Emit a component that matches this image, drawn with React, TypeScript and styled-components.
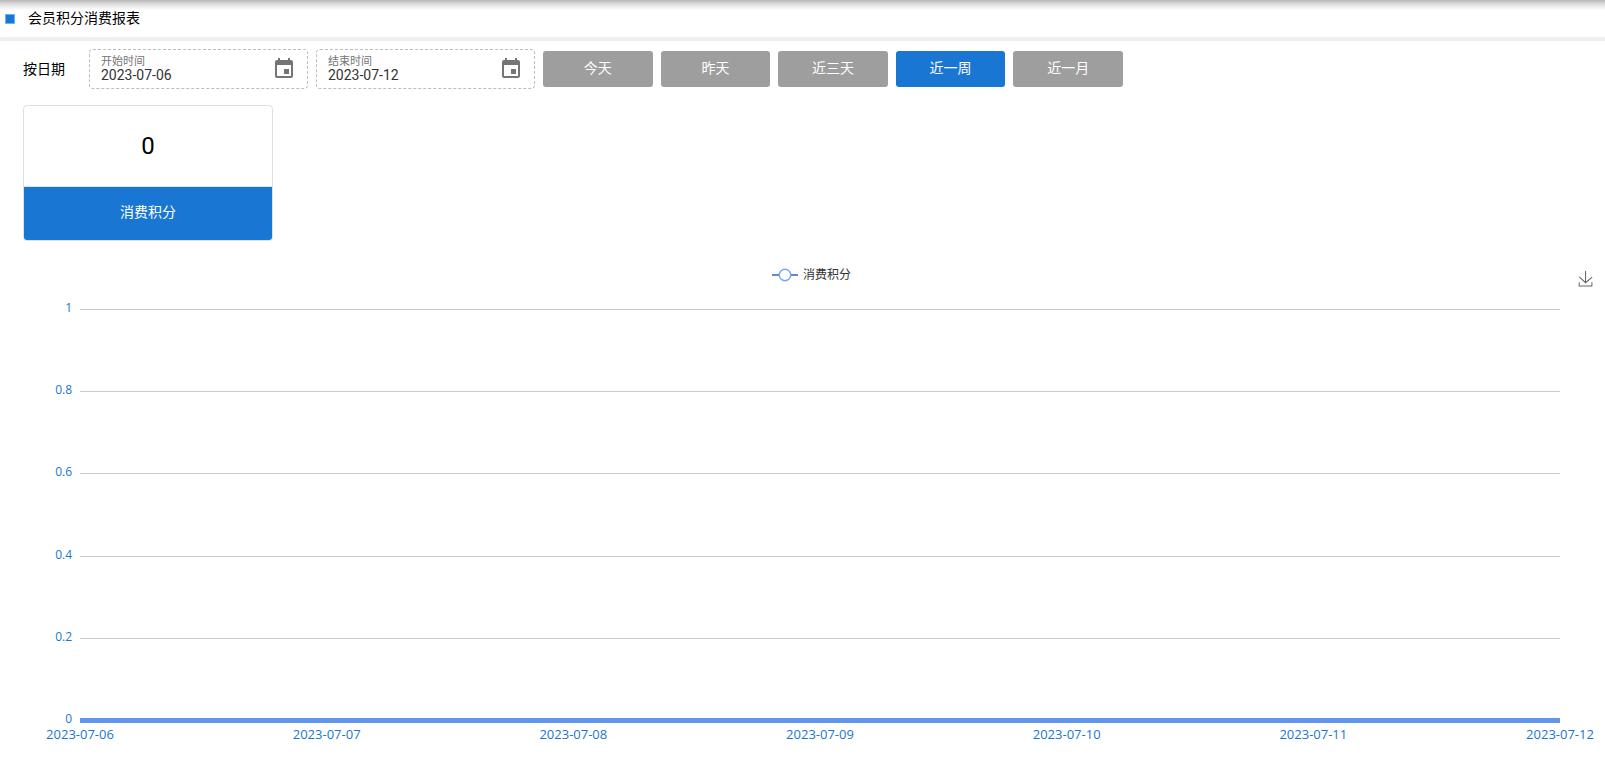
import React, { useState } from "react";
import styled, { createGlobalStyle } from "styled-components";

const BLUE = "#1976d2";

const GlobalStyle = createGlobalStyle`
  *, *::before, *::after { box-sizing: border-box; }
  body {
    margin: 0;
    background: #fff;
    color: #000;
    font: 14px/20px Roboto, "Noto Sans CJK SC", sans-serif;
  }
`;

const Header = styled.header`
  display: flex;
  align-items: center;
  gap: 13px;
  height: 41px;
  padding: 0 5px;
  border-bottom: 4px solid #eceff1;
  background: linear-gradient(#b8b8b8, #dcdcdc 4px, #fff 10px);
`;

const Marker = styled.span`
  width: 10px;
  height: 10px;
  border: 1px solid #64b5f6;
  background: ${BLUE};
`;

const Title = styled.h1`
  margin: 0;
  padding-bottom: 2px;
  font-size: 14px;
  font-weight: 400;
  line-height: 20px;
`;

const Toolbar = styled.section`
  display: flex;
  flex-wrap: wrap;
  align-items: center;
  gap: 8px;
  padding: 8px 23px;
`;

const ToolbarLabel = styled.span`
  width: 58px;
`;

const DateField = styled.div`
  display: flex;
  align-items: center;
  justify-content: space-between;
  width: 219px;
  height: 40px;
  padding: 0 11px;
  border: 1px dashed #bdbdbd;
  border-radius: 4px;
`;

const DateText = styled.div`
  display: flex;
  flex-direction: column;
`;

const DateLabel = styled.label`
  color: #757575;
  font-size: 11px;
  line-height: 12px;
`;

const DateInput = styled.input`
  width: 140px;
  height: 14px;
  padding: 0;
  border: 0;
  outline: 0;
  background: none;
  color: #333;
  font: 14px/14px Roboto, sans-serif;
`;

const IconButton = styled.button`
  display: flex;
  padding: 0;
  border: 0;
  background: none;
  color: #757575;
  cursor: pointer;
`;

const Ranges = styled.div`
  display: grid;
  grid-template-columns: repeat(5, 1fr);
  gap: 8px;
  width: 580px;
`;

const RangeButton = styled.button<{ $active: boolean }>`
  height: 36px;
  padding: 0 0 2px;
  border: 0;
  border-radius: 3px;
  background: ${(p) => (p.$active ? BLUE : "#9e9e9e")};
  color: #fff;
  font: inherit;
  cursor: pointer;
`;

const Card = styled.section`
  width: 250px;
  margin: 8px 23px 0;
  overflow: hidden;
  border: 1px solid #e0e0e0;
  border-radius: 4px;
  text-align: center;
`;

const CardValue = styled.div`
  height: 81px;
  border-bottom: 1px solid #e0e0e0;
  font-size: 24px;
  line-height: 80px;
`;

const CardLabel = styled.div`
  height: 53px;
  background: ${BLUE};
  color: #fff;
  line-height: 51px;
`;

const ChartHeader = styled.div`
  display: grid;
  grid-template-columns: 1fr auto 1fr;
  align-items: center;
  height: 32px;
  margin-top: 20px;
  padding: 0 12px 4px 30px;
`;

const Legend = styled.div`
  grid-column: 2;
  display: flex;
  align-items: center;
  gap: 5px;
  color: #333;
  font-size: 12px;
  line-height: 16px;
`;

const SaveButton = styled(IconButton)`
  justify-self: end;
  padding-top: 8px;
`;

const Plot = styled.div`
  padding: 16px 45px 20px 80px;
`;

const PlotSvg = styled.svg`
  display: block;
  width: 100%;
  height: 424px;
  overflow: visible;
  fill: ${BLUE};
  font: 12px "Open Sans", "Noto Sans", sans-serif;
`;

const DayText = styled.text`
  font-size: 13px;
`;

const ranges = ["今天", "昨天", "近三天", "近一周", "近一月"];
const ticks = [
  { label: "1", y: 0 },
  { label: "0.8", y: 82 },
  { label: "0.6", y: 164 },
  { label: "0.4", y: 247 },
  { label: "0.2", y: 329 },
  { label: "0", y: 411 },
];
const days = ["06", "07", "08", "09", "10", "11", "12"].map((d) => `2023-07-${d}`);

function DatePicker({ id, label, initial }: { id: string; label: string; initial: string }) {
  const [value, setValue] = useState(initial);
  return (
    <DateField>
      <DateText>
        <DateLabel htmlFor={id}>{label}</DateLabel>
        <DateInput id={id} value={value} onChange={(e) => setValue(e.target.value)} />
      </DateText>
      <IconButton type="button" aria-label={label}>
        <svg width="24" height="24" viewBox="0 0 24 24" fill="currentColor">
          <path d="M17 12h-5v5h5v-5zM16 1v2H8V1H6v2H5c-1.11 0-1.99.9-1.99 2L3 19c0 1.1.89 2 2 2h14c1.1 0 2-.9 2-2V5c0-1.1-.9-2-2-2h-1V1h-2zm3 18H5V8h14v11z" />
        </svg>
      </IconButton>
    </DateField>
  );
}

function Chart() {
  return (
    <section>
      <ChartHeader>
        <Legend>
          <svg width="26" height="14" viewBox="0 0 26 14">
            <path d="M0 7h26" stroke="#6488c4" strokeWidth="2" />
            <circle cx="13" cy="7" r="5.7" fill="#fff" stroke="#74a6f5" strokeWidth="1.4" />
          </svg>
          消费积分
        </Legend>
        <SaveButton type="button" aria-label="保存为图片">
          <svg width="15" height="16" viewBox="0 0 58 62" fill="none" stroke="#666" strokeWidth="4">
            <path d="M4.7,22.9L29.3,45.5L54.7,23.4M4.6,43.6L4.6,58L53.8,58L53.8,43.6M29.2,45.1L29.2,0" />
          </svg>
        </SaveButton>
      </ChartHeader>
      <Plot>
        <PlotSvg>
          {ticks.map((t) => (
            <g key={t.label}>
              <line x1="0" x2="100%" y1={t.y} y2={t.y} stroke="#ccc" shapeRendering="crispEdges" />
              <text x="-8" y={t.y + 3} textAnchor="end">{t.label}</text>
            </g>
          ))}
          <line x1="0" x2="100%" y1="411" y2="411" stroke="#6495ed" strokeWidth="5" shapeRendering="crispEdges" />
          {days.map((day, i) => (
            <DayText key={day} x={`${(i / (days.length - 1)) * 100}%`} y="430" textAnchor="middle">
              {day}
            </DayText>
          ))}
        </PlotSvg>
      </Plot>
    </section>
  );
}

export default function App() {
  const [active, setActive] = useState("近一周");
  return (
    <>
      <GlobalStyle />
      <Header>
        <Marker />
        <Title>会员积分消费报表</Title>
      </Header>
      <main>
        <Toolbar>
          <ToolbarLabel>按日期</ToolbarLabel>
          <DatePicker id="start" label="开始时间" initial="2023-07-06" />
          <DatePicker id="end" label="结束时间" initial="2023-07-12" />
          <Ranges>
            {ranges.map((r) => (
              <RangeButton key={r} type="button" $active={r === active} onClick={() => setActive(r)}>
                {r}
              </RangeButton>
            ))}
          </Ranges>
        </Toolbar>
        <Card>
          <CardValue>0</CardValue>
          <CardLabel>消费积分</CardLabel>
        </Card>
        <Chart />
      </main>
    </>
  );
}
